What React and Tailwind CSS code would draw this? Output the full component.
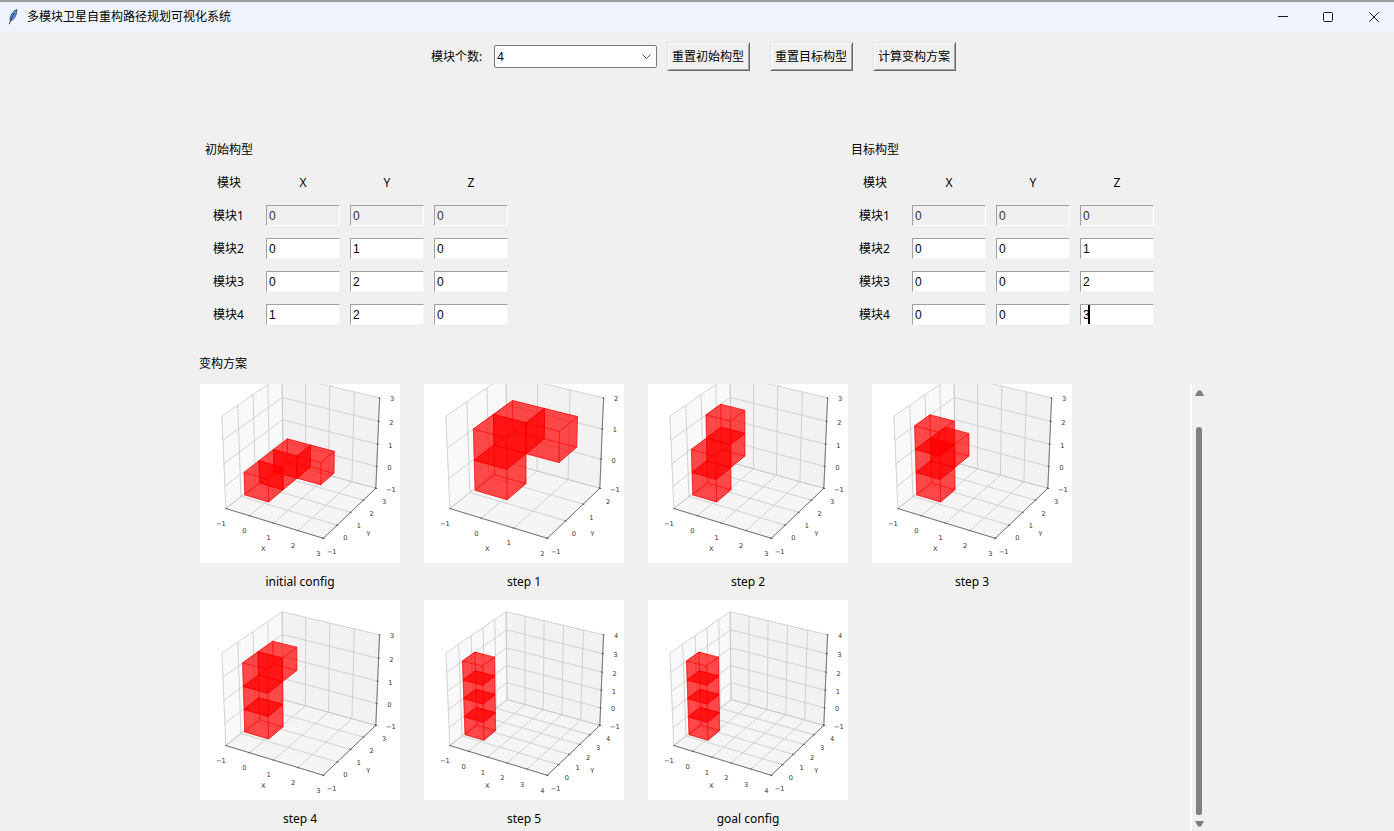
import React from 'react';

const FONT = 'font-["Noto_Sans","Noto_Sans_CJK_SC",sans-serif]';

// mplot3d default view: elev 30, azim -60, dist 10, in a unit box
const project = (x, y, z) => {
  const a = x - 0.5, b = y - 0.5, c = z - 0.5;
  const xv = 0.866 * a + 0.5 * b;
  const yv = -0.25 * a + 0.433 * b + 0.866 * c;
  const zv = 0.433 * a - 0.75 * b + 0.5 * c - 10;
  return { x: 102 + 1125 * (xv / -zv), y: 90.7 - 1055 * (yv / -zv), depth: zv };
};

const toPoints = (pts) => pts.map((p) => `${p.x.toFixed(2)},${p.y.toFixed(2)}`).join(' ');

function cubeFaces([cx, cy, cz], max) {
  const n = (v) => (v + 1) / (max + 1);
  const corner = (i, j, k) => project(n(cx + i), n(cy + j), n(cz + k));
  const l = -0.5, h = 0.5;
  return [
    [corner(l, l, l), corner(h, l, l), corner(h, h, l), corner(l, h, l)],
    [corner(l, l, h), corner(h, l, h), corner(h, h, h), corner(l, h, h)],
    [corner(l, l, l), corner(h, l, l), corner(h, l, h), corner(l, l, h)],
    [corner(l, h, l), corner(h, h, l), corner(h, h, h), corner(l, h, h)],
    [corner(l, l, l), corner(l, h, l), corner(l, h, h), corner(l, l, h)],
    [corner(h, l, l), corner(h, h, l), corner(h, h, h), corner(h, l, h)],
  ];
}

function Plot({ title, max, cubes, cropped }) {
  const ticks = [];
  for (let t = -1; t <= max; t++) ticks.push(t);
  const n = (v) => (v + 1) / (max + 1);
  const label = (t) => (t < 0 ? '\u2212' + Math.abs(t) : String(t));

  const faces = cubes
    .flatMap((c) => cubeFaces(c, max))
    .map((pts) => ({ pts, depth: pts.reduce((s, p) => s + p.depth, 0) / 4 }))
    .sort((p, q) => p.depth - q.depth);

  const line = (p, q, stroke, width, key) => (
    <line key={key} x1={p.x} y1={p.y} x2={q.x} y2={q.y} stroke={stroke} strokeWidth={width} />
  );

  return (
    <div className="flex flex-col items-center">
      <svg
        width="200"
        height={cropped ? 179 : 200}
        viewBox={cropped ? '0 21 200 179' : '0 0 200 200'}
        className="block bg-white"
      >
        <polygon points={toPoints([project(0, 0, 0), project(0, 1, 0), project(0, 1, 1), project(0, 0, 1)])} fill="#f9f9f9" />
        <polygon points={toPoints([project(0, 1, 0), project(1, 1, 0), project(1, 1, 1), project(0, 1, 1)])} fill="#f2f2f2" />
        <polygon points={toPoints([project(0, 0, 0), project(1, 0, 0), project(1, 1, 0), project(0, 1, 0)])} fill="#f5f5f5" />

        {ticks.map((t) => {
          const k = n(t);
          return (
            <g key={t}>
              {line(project(k, 0, 0), project(k, 1, 0), '#c8c8c8', 0.8)}
              {line(project(k, 1, 0), project(k, 1, 1), '#c8c8c8', 0.8)}
              {line(project(0, k, 0), project(1, k, 0), '#c8c8c8', 0.8)}
              {line(project(0, k, 0), project(0, k, 1), '#c8c8c8', 0.8)}
              {line(project(0, 1, k), project(1, 1, k), '#c8c8c8', 0.8)}
              {line(project(0, 0, k), project(0, 1, k), '#c8c8c8', 0.8)}
            </g>
          );
        })}

        {faces.map((f, i) => (
          <polygon
            key={i}
            points={toPoints(f.pts)}
            fill="#ff0000"
            fillOpacity="0.46"
            stroke="#ff0000"
            strokeOpacity="0.7"
            strokeWidth="0.6"
          />
        ))}

        {line(project(0, 0, 0), project(1, 0, 0), '#5c5c5c', 0.8)}
        {line(project(1, 0, 0), project(1, 1, 0), '#5c5c5c', 0.8)}
        {line(project(1, 1, 0), project(1, 1, 1), '#5c5c5c', 0.8)}

        {ticks.map((t) => {
          const k = n(t);
          const xt = project(k, 0, 0);
          const yt = project(1, k, 0);
          const zt = project(1, 1, k);
          const neg = t < 0;
          const textProps = { fontSize: 6.7, fill: '#333333', fontFamily: 'DejaVu Sans', textAnchor: 'middle' };
          return (
            <g key={t}>
              {line(project(k, -0.012, 0), project(k, 0.012, 0), '#444444', 0.7)}
              {line(project(1.012, k, 0), project(0.988, k, 0), '#444444', 0.7)}
              {line(project(1.012, 1, k), project(0.988, 1, k), '#444444', 0.7)}
              <text x={xt.x - 5} y={xt.y + 17.4} {...textProps}>{label(t)}</text>
              <text x={yt.x + 8.3} y={yt.y + 15.4} {...textProps}>{label(t)}</text>
              <text x={zt.x + (neg ? 15 : 12.7)} y={zt.y + (neg ? 4.1 : 3.4)} {...textProps}>{label(t)}</text>
            </g>
          );
        })}

        <text x="63.3" y="188.4" fontSize="6.7" fill="#333333" fontFamily="DejaVu Sans" textAnchor="middle">X</text>
        <text x="168.3" y="173.4" fontSize="6.7" fill="#333333" fontFamily="DejaVu Sans" textAnchor="middle">Y</text>
      </svg>
      <div className="mt-2 h-5 text-[12px] leading-[22px] text-black">{title}</div>
    </div>
  );
}

const plots = [
  { title: 'initial config', max: 3, cropped: true, cubes: [[0, 0, 0], [0, 1, 0], [0, 2, 0], [1, 2, 0]] },
  { title: 'step 1', max: 2, cropped: true, cubes: [[0, 0, 0], [0, 0, 1], [0, 1, 1], [1, 1, 1]] },
  { title: 'step 2', max: 3, cropped: true, cubes: [[0, 0, 0], [0, 0, 1], [0, 1, 1], [0, 1, 2]] },
  { title: 'step 3', max: 3, cropped: true, cubes: [[0, 0, 0], [0, 0, 1], [0, 0, 2], [0, 1, 1]] },
  { title: 'step 4', max: 3, cubes: [[0, 0, 0], [0, 0, 1], [0, 0, 2], [0, 1, 2]] },
  { title: 'step 5', max: 4, cubes: [[0, 0, 0], [0, 0, 1], [0, 0, 2], [0, 0, 3]] },
  { title: 'goal config', max: 4, cubes: [[0, 0, 0], [0, 0, 1], [0, 0, 2], [0, 0, 3]] },
];

function Field({ value, disabled, caret }) {
  return (
    <div className="relative">
      <input
        readOnly
        value={value}
        className={`block h-[21px] w-[74px] border border-t-[#a0a0a0] border-l-[#a0a0a0] pl-[2px] font-["Liberation_Sans",sans-serif] text-[12px] outline-none ${
          disabled
            ? 'bg-[#f0f0f0] border-r-white border-b-white text-[#333333]'
            : 'bg-white border-r-[#f4f4f4] border-b-[#f4f4f4] text-black'
        }`}
      />
      {caret && <span className="absolute left-[8px] top-[1px] h-[19px] w-[2px] bg-black" />}
    </div>
  );
}

function ConfigForm({ title, rows, caretAt }) {
  return (
    <div>
      <div className="h-5 pl-[6px] text-[12px] leading-[22px]">{title}</div>
      <div className="mt-[13px] grid grid-cols-[57px_74px_74px_74px] auto-rows-[21px] gap-x-[10px] gap-y-[12px] text-[12px]">
        <div className="flex items-center justify-center pl-[3px]">模块</div>
        <div className="flex items-center justify-center">X</div>
        <div className="flex items-center justify-center">Y</div>
        <div className="flex items-center justify-center">Z</div>
        {rows.map((row, i) => (
          <React.Fragment key={i}>
            <div className="flex items-center justify-center pl-[2px]">模块{i + 1}</div>
            {row.map((v, j) => (
              <Field key={j} value={v} disabled={i === 0} caret={caretAt && caretAt[0] === i && caretAt[1] === j} />
            ))}
          </React.Fragment>
        ))}
      </div>
    </div>
  );
}

function ToolButton({ children }) {
  return (
    <button className="h-[29px] w-[83px] border border-t-[#e2e2e2] border-l-[#e2e2e2] border-r-[#696969] border-b-[#696969] bg-[#f0f0f0] pr-[1px] text-[12px] text-black shadow-[inset_1px_1px_0_#ffffff,inset_-1px_-1px_0_#a0a0a0]">
      {children}
    </button>
  );
}

function Scrollbar() {
  return (
    <div className="flex h-[447px] w-[17px] flex-col items-center border-l-2 border-white pr-[1px]">
      <svg width="9" height="6" viewBox="0 0 9 6" className="mt-[6px] shrink-0">
        <path d="M3 0.5 H6 L9 6 H0 Z" fill="#7f7f7f" />
      </svg>
      <div className="mt-[31px] h-[388px] w-[6px] shrink-0 rounded-t-[3px] rounded-b-[2px] bg-[#808080]" />
      <svg width="9" height="6" viewBox="0 0 9 6" className="mt-[6px] shrink-0">
        <path d="M0 0 H9 L6 5.5 H3 Z" fill="#7f7f7f" />
      </svg>
    </div>
  );
}

export default function App() {
  return (
    <div className={`h-[831px] w-full overflow-hidden bg-[#f0f0f0] text-black ${FONT}`}>
      {/* title bar */}
      <div className="flex h-[32px] items-center border-t-2 border-[#9a9a9a] bg-[#eff3fb] pl-[8px] pr-[15px]">
        <svg width="10" height="18" viewBox="0 0 11 18" className="shrink-0">
          <path d="M9.8 0.8 C6 2 3 6 2.2 10.5 C2 12 2.6 13 3.6 13 C7 11.6 9.8 6.5 9.8 0.8 Z" fill="#5a9be8" stroke="#1f2f4f" strokeWidth="0.8" />
          <path d="M7.6 4.5 C5 8 2.8 12 1.4 17" fill="none" stroke="#1a1a2a" strokeWidth="0.9" />
        </svg>
        <div className="ml-[9px] text-[12px]">多模块卫星自重构路径规划可视化系统</div>
        <div className="ml-auto flex items-center gap-[35px]">
          <svg width="10" height="10" viewBox="0 0 10 10">
            <path d="M0 4.5 H10" stroke="#1a1a1a" strokeWidth="1" />
          </svg>
          <svg width="10" height="10" viewBox="0 0 10 10" className="mr-[1px]">
            <rect x="0.5" y="0.5" width="9" height="9" rx="1" fill="none" stroke="#1a1a1a" strokeWidth="1" />
          </svg>
          <svg width="10" height="10" viewBox="0 0 10 10">
            <path d="M0.3 0.3 L9.7 9.7 M9.7 0.3 L0.3 9.7" stroke="#1a1a1a" strokeWidth="1" />
          </svg>
        </div>
      </div>

      {/* toolbar */}
      <div className="flex h-[29px] mt-[10px] items-center pl-[431px] text-[12px]">
        <span className="w-[63px]">模块个数:</span>
        <div className="flex h-[23px] w-[163px] items-center justify-between rounded-[2px] border border-[#7a7a7a] bg-white pl-[2px] pr-[5px]">
          <span>4</span>
          <svg width="9" height="5" viewBox="0 0 9 5">
            <path d="M0.5 0.5 L4.5 4.5 L8.5 0.5" fill="none" stroke="#555555" strokeWidth="1" />
          </svg>
        </div>
        <div className="ml-[10px] flex gap-[20px]">
          <ToolButton>重置初始构型</ToolButton>
          <ToolButton>重置目标构型</ToolButton>
          <ToolButton>计算变构方案</ToolButton>
        </div>
      </div>

      {/* config forms */}
      <div className="mt-[68px] flex pl-[199px]">
        <div className="w-[646px]">
          <ConfigForm
            title="初始构型"
            rows={[['0', '0', '0'], ['0', '1', '0'], ['0', '2', '0'], ['1', '2', '0']]}
          />
        </div>
        <ConfigForm
          title="目标构型"
          rows={[['0', '0', '0'], ['0', '0', '1'], ['0', '0', '2'], ['0', '0', '3']]}
          caretAt={[3, 2]}
        />
      </div>

      {/* results */}
      <div className="mt-[28px] h-5 pl-[199px] text-[12px] leading-[22px]">变构方案</div>
      <div className="mt-[11px] flex pl-[200px]">
        <div className="grid w-[990px] grid-cols-[200px_200px_200px_200px] content-start gap-x-[24px] gap-y-[9px]">
          {plots.map((p) => (
            <Plot key={p.title} {...p} />
          ))}
        </div>
        <Scrollbar />
      </div>
    </div>
  );
}
